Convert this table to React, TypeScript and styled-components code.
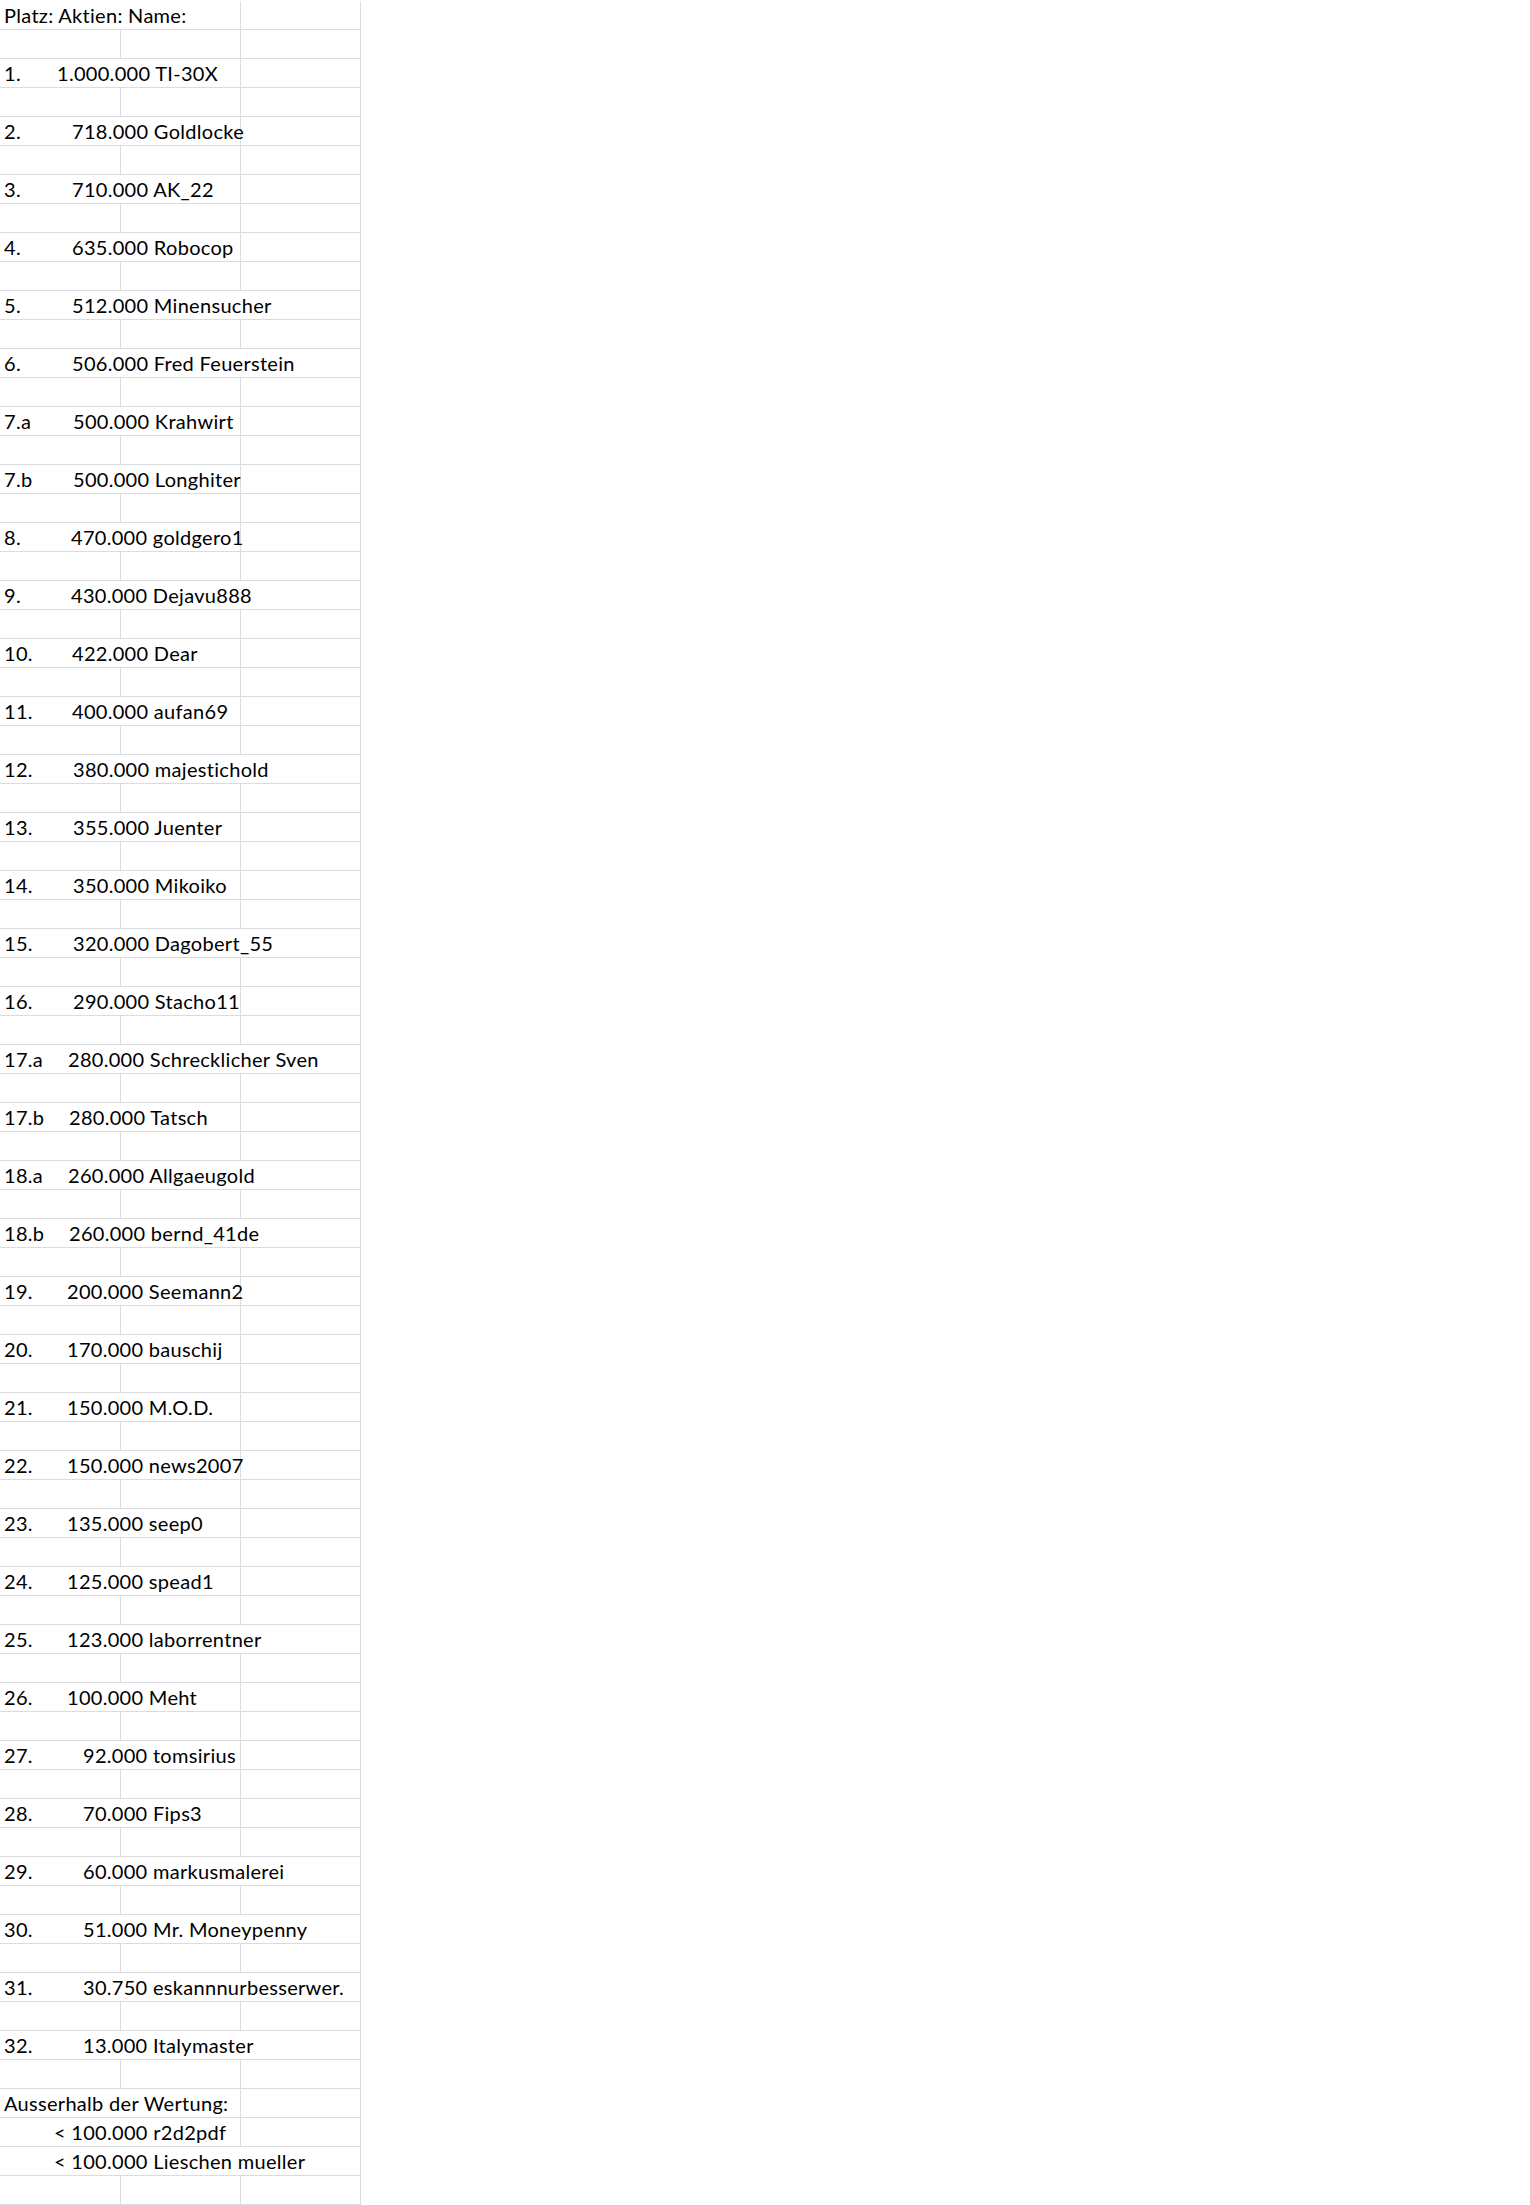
import * as React from 'react'
import styled, { createGlobalStyle } from 'styled-components'

const GlobalStyle = createGlobalStyle`
  html, body {
    margin: 0;
    padding: 0;
    background: #fff;
  }
`

const GRID = '#dadcdd'

const Sheet = styled.div`
  width: 361px;
  padding-top: 1px;
  font-family: Lato, "Liberation Sans", sans-serif;
  font-size: 20px;
  letter-spacing: 0.3px;
  color: #000;
`

const Row = styled.div`
  display: grid;
  grid-template-columns: 121px 120px 120px;
  height: 29px;
`

const Cell = styled.div<{ $span?: number }>`
  grid-column: span ${ ({ $span }) => $span ?? 1 };
  box-sizing: border-box;
  height: 29px;
  border-right: 1px solid ${ GRID };
  border-bottom: 1px solid ${ GRID };
  padding: 3px 0 0 4px;
  line-height: 22px;
  white-space: nowrap;
`

const Rank = styled.span<{ $at: number }>`
  display: inline-block;
  width: ${ ({ $at }) => $at - 4 }px;
`

interface Entry {
  rank: string
  amount: string
  name: string
  at: number
  span: number
}

const entries: Entry[] = [
  { rank: '1.', amount: '1.000.000', name: 'TI-30X', at: 57, span: 2 },
  { rank: '2.', amount: '718.000', name: 'Goldlocke', at: 72, span: 2 },
  { rank: '3.', amount: '710.000', name: 'AK_22', at: 72, span: 2 },
  { rank: '4.', amount: '635.000', name: 'Robocop', at: 72, span: 2 },
  { rank: '5.', amount: '512.000', name: 'Minensucher', at: 72, span: 3 },
  { rank: '6.', amount: '506.000', name: 'Fred Feuerstein', at: 72, span: 3 },
  { rank: '7.a', amount: '500.000', name: 'Krahwirt', at: 73, span: 2 },
  { rank: '7.b', amount: '500.000', name: 'Longhiter', at: 73, span: 2 },
  { rank: '8.', amount: '470.000', name: 'goldgero1', at: 71, span: 2 },
  { rank: '9.', amount: '430.000', name: 'Dejavu888', at: 71, span: 3 },
  { rank: '10.', amount: '422.000', name: 'Dear', at: 72, span: 2 },
  { rank: '11.', amount: '400.000', name: 'aufan69', at: 72, span: 2 },
  { rank: '12.', amount: '380.000', name: 'majestichold', at: 73, span: 3 },
  { rank: '13.', amount: '355.000', name: 'Juenter', at: 73, span: 2 },
  { rank: '14.', amount: '350.000', name: 'Mikoiko', at: 73, span: 2 },
  { rank: '15.', amount: '320.000', name: 'Dagobert_55', at: 73, span: 3 },
  { rank: '16.', amount: '290.000', name: 'Stacho11', at: 73, span: 2 },
  { rank: '17.a', amount: '280.000', name: 'Schrecklicher Sven', at: 68, span: 3 },
  { rank: '17.b', amount: '280.000', name: 'Tatsch', at: 69, span: 2 },
  { rank: '18.a', amount: '260.000', name: 'Allgaeugold', at: 68, span: 3 },
  { rank: '18.b', amount: '260.000', name: 'bernd_41de', at: 69, span: 3 },
  { rank: '19.', amount: '200.000', name: 'Seemann2', at: 67, span: 2 },
  { rank: '20.', amount: '170.000', name: 'bauschij', at: 67, span: 2 },
  { rank: '21.', amount: '150.000', name: 'M.O.D.', at: 67, span: 2 },
  { rank: '22.', amount: '150.000', name: 'news2007', at: 67, span: 2 },
  { rank: '23.', amount: '135.000', name: 'seep0', at: 67, span: 2 },
  { rank: '24.', amount: '125.000', name: 'spead1', at: 67, span: 2 },
  { rank: '25.', amount: '123.000', name: 'laborrentner', at: 67, span: 3 },
  { rank: '26.', amount: '100.000', name: 'Meht', at: 67, span: 2 },
  { rank: '27.', amount: '92.000', name: 'tomsirius', at: 83, span: 2 },
  { rank: '28.', amount: '70.000', name: 'Fips3', at: 83, span: 2 },
  { rank: '29.', amount: '60.000', name: 'markusmalerei', at: 83, span: 3 },
  { rank: '30.', amount: '51.000', name: 'Mr. Moneypenny', at: 83, span: 3 },
  { rank: '31.', amount: '30.750', name: 'eskannnurbesserwer.', at: 83, span: 3 },
  { rank: '32.', amount: '13.000', name: 'Italymaster', at: 83, span: 3 },
]

const outside: Entry[] = [
  { rank: '', amount: '< 100.000', name: 'r2d2pdf', at: 54, span: 2 },
  { rank: '', amount: '< 100.000', name: 'Lieschen mueller', at: 54, span: 3 },
]

const EmptyRow = () => (
  <Row>
    <Cell />
    <Cell />
    <Cell />
  </Row>
)

const TextRow = ({ span, children }: { span: number, children: React.ReactNode }) => (
  <Row>
    <Cell $span={ span }>{ children }</Cell>
    { span < 3 && <Cell /> }
  </Row>
)

const EntryRow = ({ entry }: { entry: Entry }) => (
  <TextRow span={ entry.span }>
    <Rank $at={ entry.at }>{ entry.rank }</Rank>
    { entry.amount } { entry.name }
  </TextRow>
)

export default function App() {
  return (
    <>
      <GlobalStyle />
      <Sheet>
        <TextRow span={ 2 }>Platz: Aktien: Name:</TextRow>
        <EmptyRow />
        { entries.map(e => (
          <React.Fragment key={ e.rank }>
            <EntryRow entry={ e } />
            <EmptyRow />
          </React.Fragment>
        )) }
        <TextRow span={ 2 }>Ausserhalb der Wertung:</TextRow>
        { outside.map(e => <EntryRow key={ e.name } entry={ e } />) }
        <EmptyRow />
      </Sheet>
    </>
  )
}
